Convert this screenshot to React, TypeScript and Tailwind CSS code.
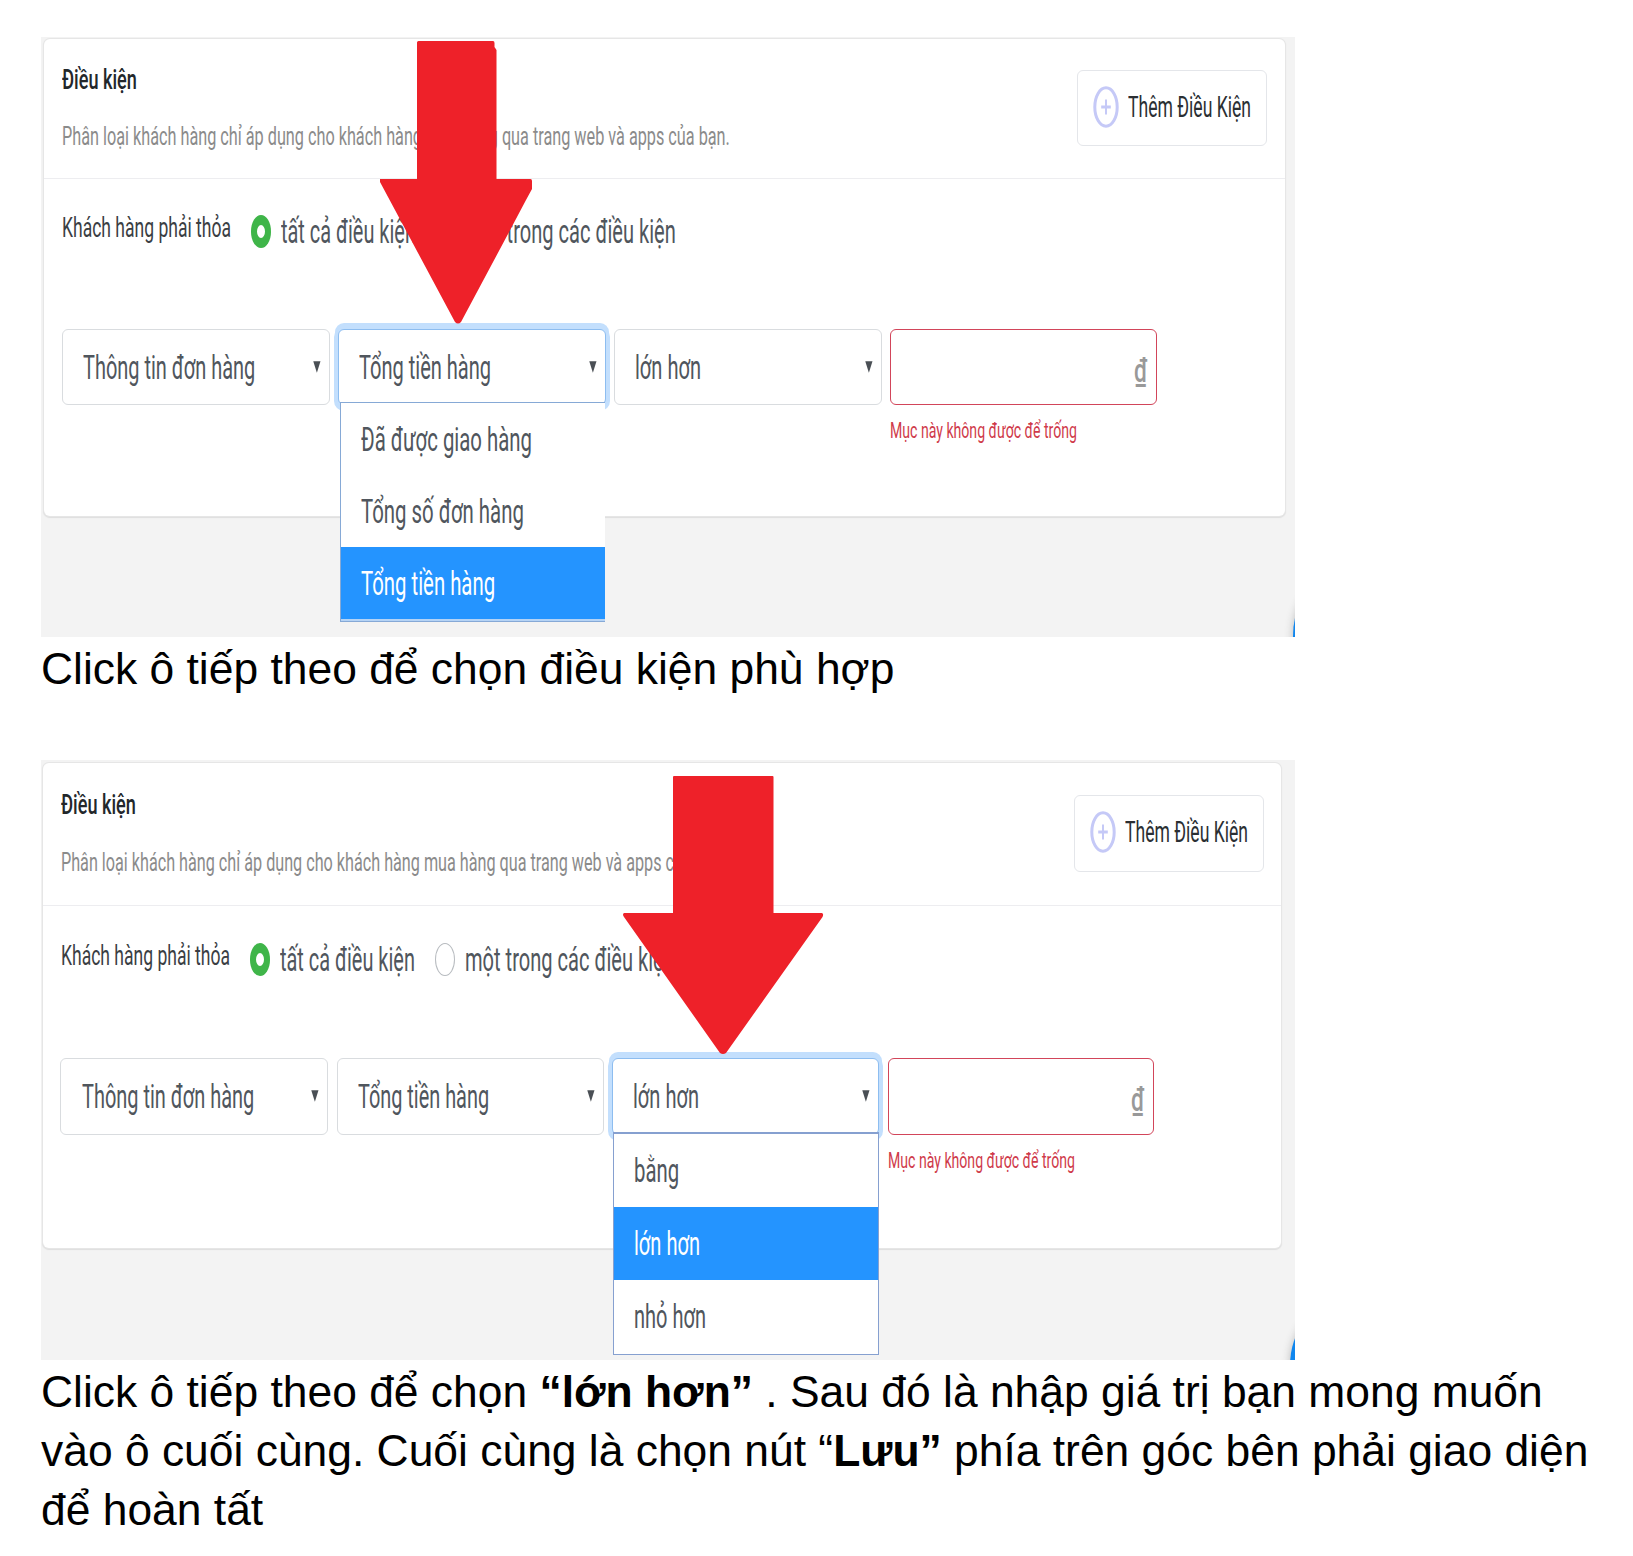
import { useLayoutEffect, useRef, type ReactNode } from "react";
import clsx from "clsx";

/** Single line of text squeezed horizontally to fill the width of its box. */
function Fit({ className, children }: { className: string; children: ReactNode }) {
  const outer = useRef<HTMLSpanElement>(null);
  const inner = useRef<HTMLSpanElement>(null);
  useLayoutEffect(() => {
    if (!outer.current || !inner.current) return;
    const k = outer.current.clientWidth / inner.current.offsetWidth;
    inner.current.style.transform = `scaleX(${k})`;
  }, []);
  return (
    <span ref={outer} className={clsx("block h-9 shrink-0 leading-9 whitespace-nowrap", className)}>
      <span ref={inner} className="inline-block origin-left">
        {children}
      </span>
    </span>
  );
}

function PlusIcon() {
  return (
    <svg className="h-[42px] w-[26px] shrink-0" viewBox="0 0 26 42" fill="none" stroke="#c5c9f7">
      <ellipse cx="13" cy="21" rx="11.2" ry="19.2" strokeWidth="3" />
      <path d="M13 13.5v15" strokeWidth="2" />
      <path d="M8.2 21h9.6" strokeWidth="3" />
    </svg>
  );
}

function Radio({ checked }: { checked?: boolean }) {
  return checked ? (
    <span className="flex h-[33px] w-5 shrink-0 items-center justify-center rounded-[50%] bg-[#3fb549]">
      <span className="h-[13px] w-2 rounded-[50%] bg-white" />
    </span>
  ) : (
    <span className="h-[33px] w-5 shrink-0 rounded-[50%] border border-[#b8bcc0] bg-white" />
  );
}

function Caret() {
  return (
    <svg className="mt-[31px] h-3 w-2 shrink-0" viewBox="0 0 8 12">
      <path d="M0.3 0.3h7.2L3.9 11.8z" fill="#4a4f55" />
    </svg>
  );
}

type Option = { label: string; width: string; active?: boolean };

type SelectProps = {
  label: string;
  width: string;
  box: string;
  open?: boolean;
  menu?: string;
  item?: string;
  options?: Option[];
};

function Select({ label, width, box, open, menu, item, options }: SelectProps) {
  return (
    <div className={clsx("relative shrink-0", box)}>
      <div
        className={clsx(
          "flex h-full justify-between rounded-[6px] border bg-white pr-[8px] pl-[20px]",
          open
            ? "border-[#8dbdf0] shadow-[0_-3px_0_3px_#c3dffd,0_2px_0_4px_#c3dffd]"
            : "border-[#d9dcdf]",
        )}
      >
        <Fit className={clsx("mt-[20px] text-[32.500px] text-[#50565d]", width)}>{label}</Fit>
        <Caret />
      </div>
      {options && (
        <div className={clsx("absolute z-10 bg-white", menu)}>
          {options.map((o) => (
            <div
              key={o.label}
              className={clsx(
                "flex items-center pt-px pl-[20px]",
                item,
                o.active ? "bg-[#2494ff] text-white" : "text-[#50565d]",
              )}
            >
              <Fit className={clsx("text-[32.500px]", o.width)}>{o.label}</Fit>
            </div>
          ))}
        </div>
      )}
    </div>
  );
}

type PanelProps = {
  card: string;
  header: string;
  heading: string;
  note: string;
  button: string;
  match: string;
  row: string;
  field: string;
  children: ReactNode;
  overlay: ReactNode;
};

function Panel({ card, header, heading, note, button, match, row, field, children, overlay }: PanelProps) {
  return (
    <section className="relative h-[600px] w-[1254px] overflow-hidden bg-[#f3f3f3] font-[Roboto,sans-serif]">
      <div className={clsx("rounded-[6px] bg-white shadow-[0_0_0_1px_#e6e6e6,0_1px_1px_1px_#dedede]", card)}>
        <div className={clsx("flex justify-between border-b border-[#ededf0]", header)}>
          <div className={heading}>
            <Fit className="w-[75px] text-[28px] font-medium text-[#23272b]">Điều kiện</Fit>
            <Fit className={clsx("text-[25px] text-[#8b8b8b]", note)}>
              Phân loại khách hàng chỉ áp dụng cho khách hàng mua hàng qua trang web và apps của bạn.
            </Fit>
          </div>
          <div className={clsx("flex rounded-[6px] border border-[#e4e6ea] pt-[15px] pl-[15px]", button)}>
            <PlusIcon />
            <Fit className="mt-[3px] ml-[9px] w-[123px] text-[30px] text-[#2b2f33]">Thêm Điều Kiện</Fit>
          </div>
        </div>
        <div className={clsx("flex", match)}>
          <Fit className="mr-5 w-[169px] text-[28px] text-[#3a3e43]">Khách hàng phải thỏa</Fit>
          <div className="flex h-[41px] pt-[5px]">
            <Radio checked />
            <Fit className="-mt-px mr-[20px] ml-[10px] w-[135px] text-[32.500px] text-[#50565d]">tất cả điều kiện</Fit>
            <Radio />
            <Fit className="-mt-px ml-[10px] w-[210px] text-[32.500px] text-[#50565d]">một trong các điều kiện</Fit>
          </div>
        </div>
        <div className={clsx("flex", row)}>
          {children}
          <div className="shrink-0">
            <div className={clsx("flex justify-end rounded-[6px] border border-[#d2455a] pt-[23px] pr-[9px]", field)}>
              <Fit className="w-[13px] text-[33px] font-medium text-[#999999]">₫</Fit>
            </div>
            <Fit className="mt-[8px] w-[187px] text-[22px] text-[#cf3a4a]">Mục này không được để trống</Fit>
          </div>
        </div>
      </div>
      {overlay}
    </section>
  );
}

export default function App() {
  return (
    <main className="h-[1556px] w-[1633px] overflow-hidden bg-white pt-[37px] pl-[41px]">
      <Panel
        card="ml-[3px] mt-[2px] h-[477px] w-[1241px]"
        header="h-[140px] pr-[18px] pl-[18px]"
        heading="pt-[23px]"
        note="mt-[21px] w-[668px]"
        button="mt-[31px] h-[76px] w-[190px]"
        match="mt-[31px] pl-[18px]"
        row="mt-[78px] gap-[8.200px] pl-[17.600px]"
        field="h-[76px] w-[267px]"
        overlay={
          <>
            <svg className="absolute top-[4px] left-[339px] z-20 h-[283px] w-[153px]" viewBox="0 0 153 283">
              <path
                d="M37 1.5Q37 0 38.5 0H113Q114.500 0 114.500 2V6L116.500 9V138H150.500Q152 138 152 140V148L146 159L120 208L81 281Q78 284 75 281L0 141V138H37z"
                fill="#ee2129"
              />
            </svg>
            <span className="absolute top-[549px] left-[1252px] h-[100px] w-[60px] rounded-[50%] bg-[#0f86ee] shadow-[0_0_8px_#bbbbbb]" />
          </>
        }
      >
        <Select label="Thông tin đơn hàng" width="w-[172px]" box="h-[76px] w-[268px]" />
        <Select
          label="Tổng tiền hàng"
          width="w-[132px]"
          box="h-[76px] w-[268px]"
          open
          menu="top-[73px] left-[2px] w-[265px] border-l border-t border-b border-[#86a9d6] pb-[2px] before:absolute before:bottom-0 before:h-[2px] before:w-full before:bg-[#b5d3f5]"
          item="h-[72px]"
          options={[
            { label: "Đã được giao hàng", width: "w-[171px]" },
            { label: "Tổng số đơn hàng", width: "w-[163px]" },
            { label: "Tổng tiền hàng", width: "w-[134px]", active: true },
          ]}
        />
        <Select label="lớn hơn" width="w-[66px]" box="h-[76px] w-[268px]" />
      </Panel>

      <p className="h-[123px] pt-[2px] font-['Liberation_Sans',sans-serif] text-[44.400px] leading-[59px] whitespace-nowrap text-black">
        Click ô tiếp theo để chọn điều kiện phù hợp
      </p>

      <Panel
        card="ml-[2px] mt-[3px] h-[485px] w-[1238px]"
        header="h-[143px] pr-[17px] pl-[18px]"
        heading="pt-[24px]"
        note="mt-[22px] w-[666px]"
        button="mt-[32px] h-[77px] w-[190px]"
        match="mt-[32px] pl-[17.500px]"
        row="mt-[79px] gap-[8.400px] pl-[17.400px]"
        field="h-[77px] w-[266px]"
        overlay={
          <>
            <svg className="absolute top-[15.500px] left-[582px] z-20 h-[279px] w-[201px]" viewBox="0 0 201 279">
              <path
                d="M50 1Q50 0 51 0H149.500Q150.500 0 150.500 1V137H199Q201 138 199.500 141L103 277Q100 279 97 277L1 141Q-1 138 1 137H50z"
                fill="#ee2129"
              />
            </svg>
            <span className="absolute top-[556px] left-[1248.500px] h-[100px] w-[60px] rounded-[50%] bg-[#0f86ee] shadow-[0_0_8px_#bbbbbb]" />
          </>
        }
      >
        <Select label="Thông tin đơn hàng" width="w-[172px]" box="h-[77px] w-[268px] *:first:pl-[21px]" />
        <Select label="Tổng tiền hàng" width="w-[131px]" box="h-[77px] w-[267px]" />
        <Select
          label="lớn hơn"
          width="w-[66px]"
          box="h-[77px] w-[267px]"
          open
          menu="top-[74px] left-px w-[266px] border border-t-2 border-[#86a0d0] pb-px"
          item="h-[73px]"
          options={[
            { label: "bằng", width: "w-[45px]" },
            { label: "lớn hơn", width: "w-[66px]", active: true },
            { label: "nhỏ hơn", width: "w-[72px]" },
          ]}
        />
      </Panel>

      <p className="pt-[2px] font-['Liberation_Sans',sans-serif] text-[44.400px] leading-[59px] whitespace-nowrap text-black">
        Click ô tiếp theo để chọn <b>“lớn hơn”</b> . Sau đó là nhập giá trị bạn mong muốn
        <br />
        vào ô cuối cùng. Cuối cùng là chọn nút “<b>Lưu”</b> phía trên góc bên phải giao diện
        <br />
        để hoàn tất
      </p>
    </main>
  );
}
